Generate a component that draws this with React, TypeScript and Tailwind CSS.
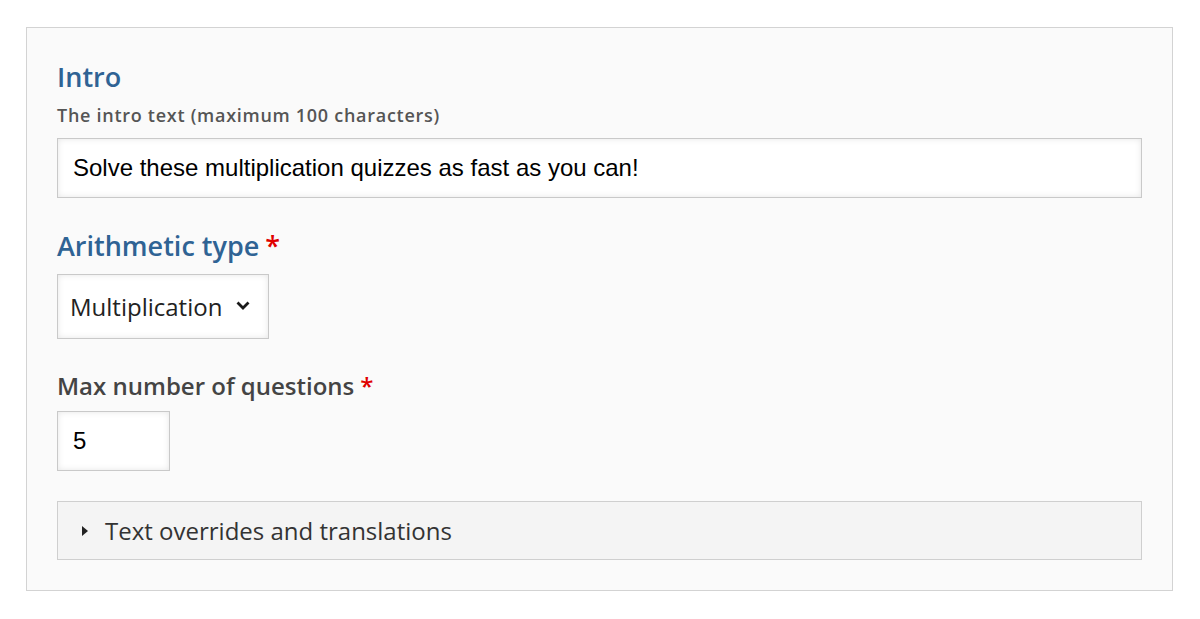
import React from 'react';

const fieldShadow = 'shadow-[inset_0_0_6px_rgba(0,0,0,0.1)]';

const Required = () => <span className="text-[#e00000] ml-1.5">*</span>;

const App: React.FC = () => {
  return (
    <div className="min-h-screen bg-white pt-[27px] px-[26px] font-['Open_Sans',sans-serif]">
      <div className="w-[1147px] border border-[#d3d3d3] bg-[#fafafa] px-[30px] pt-[32px] pb-[30px]">
        <h2 className="text-[27px] leading-[34px] font-semibold text-[#2f6394]">Intro</h2>
        <div className="mt-[9px] text-[18px] leading-[24px] font-semibold text-[#555] tracking-[0.04em]">
          The intro text (maximum 100 characters)
        </div>
        <div
          className={`mt-[11px] h-[60px] border border-[#c9c9c9] bg-white flex items-center px-[15px] font-['Liberation_Sans',Arial,sans-serif] text-[24px] text-black ${fieldShadow}`}
        >
          Solve these multiplication quizzes as fast as you can!
        </div>

        <h2 className="mt-[31px] text-[27px] leading-[34px] font-semibold text-[#2f6394]">
          Arithmetic type
          <Required />
        </h2>
        <div
          className={`mt-[11px] w-[212px] h-[65px] border border-[#c9c9c9] bg-white flex items-center pl-[12px] pr-[18px] justify-between text-[24px] text-[#222] ${fieldShadow}`}
        >
          <span>Multiplication</span>
          <svg width="14" height="9" viewBox="0 0 14 9" className="mt-[-2px]">
            <polyline points="1.5,1.5 7,7 12.5,1.5" fill="none" stroke="#1a1a1a" strokeWidth="2.8" />
          </svg>
        </div>

        <div className="mt-[32px] text-[24px] leading-[30px] font-semibold text-[#444]">
          Max number of questions
          <Required />
        </div>
        <div
          className={`mt-[10px] w-[113px] h-[60px] border border-[#c9c9c9] bg-white flex items-center px-[15px] font-['Liberation_Sans',Arial,sans-serif] text-[24px] text-black ${fieldShadow}`}
        >
          5
        </div>

        <div className="mt-[30px] h-[59px] border border-[#cfcfcf] bg-[#f4f4f4] flex items-center pl-[24px] text-[24px] text-[#333]">
          <svg width="6" height="10" viewBox="0 0 6 10" className="mr-[17px]">
            <polygon points="0,0 6,5 0,10" fill="#222" />
          </svg>
          Text overrides and translations
        </div>
      </div>
    </div>
  );
};

export default App;
